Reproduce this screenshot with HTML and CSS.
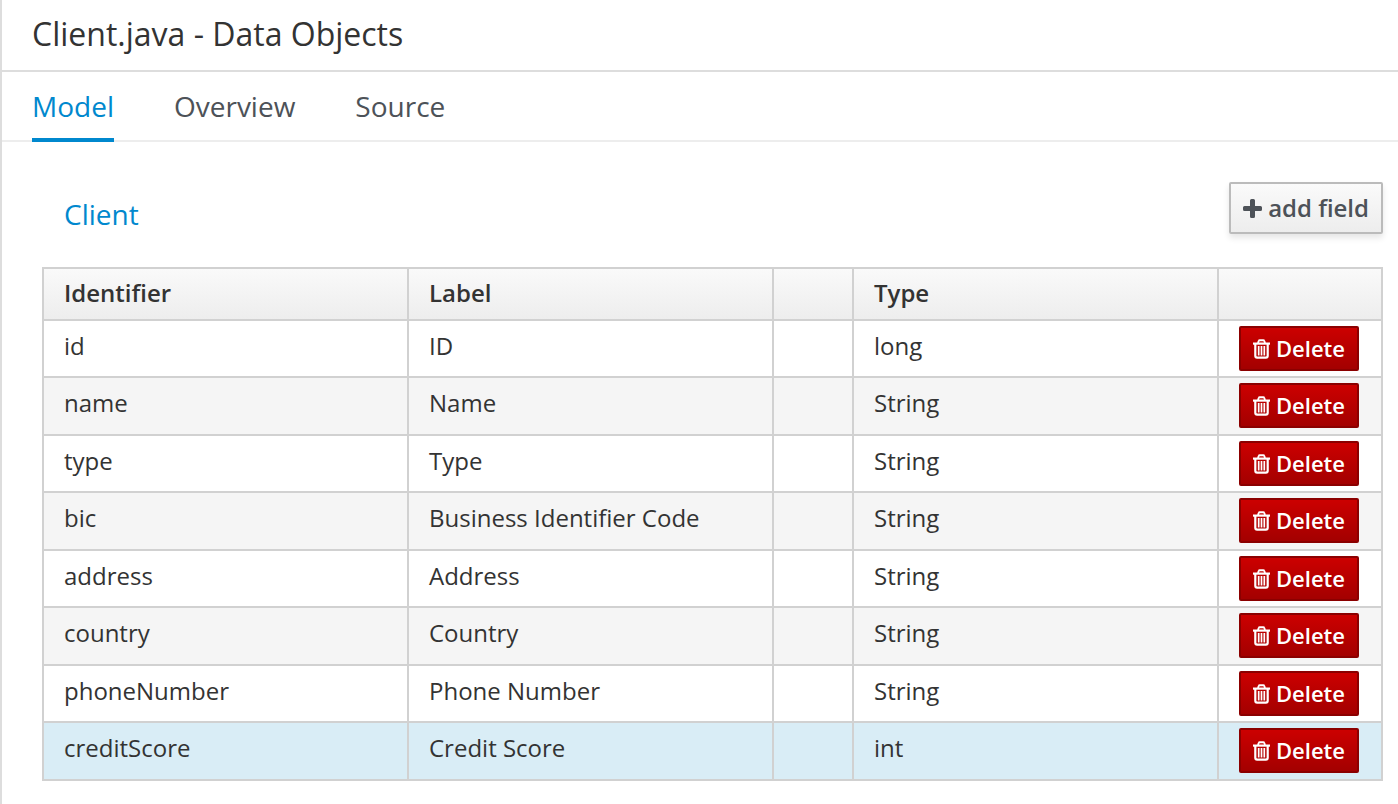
FILE: index.html
```html
<!DOCTYPE html>
<html lang="en">
<head>
<meta charset="utf-8">
<title>Client.java - Data Objects</title>
<link rel="stylesheet" href="styles.css">
</head>
<body>
<svg class="sprite" aria-hidden="true">
  <symbol id="trash" viewBox="0 0 17 20">
    <path d="M5 4 5.800 1.800Q6 1.200 6.700 1.200h3.600q.7 0 .9.6L12 4" fill="none" stroke="currentColor" stroke-width="1.900"/>
    <path d="M0 3.500h17v2.200H0z" fill="currentColor"/>
    <path d="M2.300 5v11.700q0 1.900 1.800 1.900h8.800q1.800 0 1.800-1.900V5" fill="none" stroke="currentColor" stroke-width="2.200"/>
    <path d="M5.700 7v9.500M8.500 7v9.500M11.300 7v9.500" fill="none" stroke="currentColor" stroke-width="1.700"/>
  </symbol>
</svg>
<header class="titlebar"><h1 class="title">Client.java - Data Objects</h1></header>
<nav class="tabs">
  <a class="tab tab-active" href="#model" aria-current="page">Model</a>
  <a class="tab" href="#overview">Overview</a>
  <a class="tab" href="#source">Source</a>
</nav>
<main class="content" id="model">
  <div class="toolbar">
    <h2 class="object-name"><a class="object-link" href="#client">Client</a></h2>
    <button class="add-button" type="button"><svg class="plus-icon" viewBox="0 0 19 19" aria-hidden="true"><path d="M8.500 0h2q1.500 0 1.500 1.500V7h5.500Q19 7 19 8.500v2q0 1.500-1.500 1.500H12v5.500q0 1.500-1.500 1.500h-2Q7 19 7 17.500V12H1.500Q0 12 0 10.500v-2Q0 7 1.500 7H7V1.500Q7 0 8.500 0z" fill="currentColor"/></svg>add field</button>
  </div>
  <table class="fields">
    <colgroup><col class="col-wide"><col class="col-wide"><col class="col-blank"><col class="col-wide"><col class="col-action"></colgroup>
    <thead><tr><th scope="col">Identifier</th><th scope="col">Label</th><td></td><th scope="col">Type</th><td></td></tr></thead>
    <tbody>
      <tr><td>id</td><td>ID</td><td></td><td>long</td><td class="action"><button class="delete-button" type="button"><svg class="trash-icon" aria-hidden="true"><use href="#trash"/></svg>Delete</button></td></tr>
      <tr><td>name</td><td>Name</td><td></td><td>String</td><td class="action"><button class="delete-button" type="button"><svg class="trash-icon" aria-hidden="true"><use href="#trash"/></svg>Delete</button></td></tr>
      <tr><td>type</td><td>Type</td><td></td><td>String</td><td class="action"><button class="delete-button" type="button"><svg class="trash-icon" aria-hidden="true"><use href="#trash"/></svg>Delete</button></td></tr>
      <tr><td>bic</td><td>Business Identifier Code</td><td></td><td>String</td><td class="action"><button class="delete-button" type="button"><svg class="trash-icon" aria-hidden="true"><use href="#trash"/></svg>Delete</button></td></tr>
      <tr><td>address</td><td>Address</td><td></td><td>String</td><td class="action"><button class="delete-button" type="button"><svg class="trash-icon" aria-hidden="true"><use href="#trash"/></svg>Delete</button></td></tr>
      <tr><td>country</td><td>Country</td><td></td><td>String</td><td class="action"><button class="delete-button" type="button"><svg class="trash-icon" aria-hidden="true"><use href="#trash"/></svg>Delete</button></td></tr>
      <tr><td>phoneNumber</td><td>Phone Number</td><td></td><td>String</td><td class="action"><button class="delete-button" type="button"><svg class="trash-icon" aria-hidden="true"><use href="#trash"/></svg>Delete</button></td></tr>
      <tr class="selected"><td>creditScore</td><td>Credit Score</td><td></td><td>int</td><td class="action"><button class="delete-button" type="button"><svg class="trash-icon" aria-hidden="true"><use href="#trash"/></svg>Delete</button></td></tr>
    </tbody>
  </table>
</main>
</body>
</html>
```
FILE: styles.css
```css
* { box-sizing: border-box; }
body {
  margin: 0;
  min-height: 100vh;
  border-left: 2px solid #ddd;
  background: #fff;
  color: #333;
  font: 24px/34px "Open Sans", sans-serif;
}
.sprite { position: absolute; width: 0; height: 0; }
.titlebar { padding: 14px 30px 16px; border-bottom: 2px solid #ddd; }
.title { margin: 0; font-size: 32px; line-height: 40px; font-weight: 400; }
.tabs {
  display: flex;
  gap: 60px;
  padding: 0 30px;
  border-bottom: 2px solid #ededed;
  font-size: 28px;
  line-height: 40px;
}
.tab {
  margin-bottom: -2px;
  padding: 14px 0 12px;
  border-bottom: 4px solid transparent;
  color: #4d5258;
  text-decoration: none;
}
.tab-active { color: #0088ce; border-bottom-color: #0088ce; }
.content { padding: 40px 15px 20px 40px; }
.toolbar {
  display: flex;
  align-items: flex-start;
  justify-content: space-between;
  padding-left: 22px;
  margin-bottom: 33px;
}
.object-name { margin: 0; padding-top: 12px; font-size: 28px; line-height: 40px; font-weight: 400; }
.object-link { color: #0088ce; text-decoration: none; }
.add-button,
.delete-button {
  display: inline-flex;
  align-items: center;
  font-family: inherit;
  font-weight: 600;
  white-space: nowrap;
}
.add-button {
  gap: 6px;
  padding: 7px 12px;
  border: 2px solid #bbb;
  border-radius: 2px;
  background: linear-gradient(#fafafa, #ededed);
  box-shadow: 0 4px 6px rgba(3, 3, 3, 0.1);
  color: #4d5258;
  font-size: 24px;
  line-height: 34px;
}
.plus-icon { width: 19px; height: 19px; }
.fields { width: 100%; table-layout: fixed; border-collapse: collapse; }
.col-blank { width: 80px; }
.col-action { width: 164px; }
.fields th, .fields td {
  padding: 8px 20px 12px;
  border: 2px solid #d1d1d1;
  text-align: left;
  vertical-align: top;
  font-weight: 400;
}
.fields thead { background: linear-gradient(#fafafa, #ededed); }
.fields thead th { padding: 7px 20px 9px; font-weight: 600; }
.fields thead td { padding: 0; }
.fields tbody tr { height: 57px; }
.fields tbody tr:nth-child(even) { height: 58px; background: #f5f5f5; }
.fields tbody tr.selected:nth-child(n) { background: #d9edf6; }
.fields tbody .action { padding: 5px 20px 4px; line-height: 0; }
.delete-button {
  gap: 6px;
  padding: 5px 12px;
  border: 2px solid #8b0000;
  border-radius: 2px;
  background: linear-gradient(#c00, #a30000);
  color: #fff;
  font-size: 22px;
  line-height: 31px;
}
.trash-icon { width: 17px; height: 20px; }
```
